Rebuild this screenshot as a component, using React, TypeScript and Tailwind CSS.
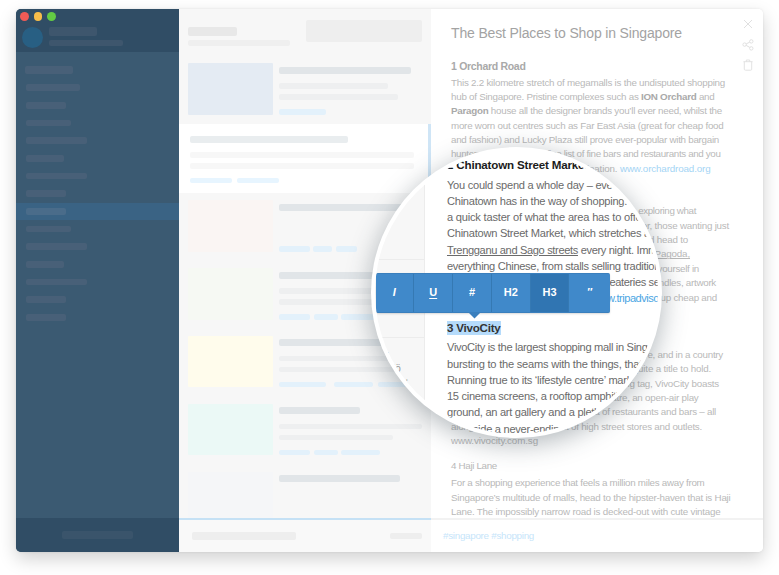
import { useLayoutEffect, useRef, type ReactNode } from "react";

/** One line of copy whose tracking is adjusted so that it fills `w` pixels. */
function Line({ w, className = "", children }: { w: number; className?: string; children: ReactNode }) {
  const ref = useRef<HTMLSpanElement>(null);
  useLayoutEffect(() => {
    const el = ref.current;
    if (!el) return;
    el.style.letterSpacing = "0px";
    const n = (el.textContent ?? "").length;
    const natural = el.getBoundingClientRect().width;
    el.style.letterSpacing = `${(w - natural) / n}px`;
  }, [w]);
  return (
    <div className={`whitespace-nowrap ${className}`}>
      <span ref={ref} className="inline-block whitespace-pre">
        {children}
      </span>
    </div>
  );
}

const navWidths = [
  "w-[54px]",
  "w-[40px]",
  "w-[44.5px]",
  "w-[61px]",
  "w-[38px]",
  "w-[61px]",
  "w-[40px]",
  "w-[40px]",
  "w-[44.5px]",
  "w-[61px]",
  "w-[38px]",
  "w-[61px]",
  "w-[40px]",
  "w-[40px]",
];

function Sidebar() {
  return (
    <aside className="flex w-[163px] shrink-0 flex-col bg-[#3b5a72]">
      <div className="h-[43px] bg-[#304d65] pt-[3px] pl-1">
        <div className="flex gap-[5px]">
          <i className="size-[8.5px] rounded-full bg-[#f05b56]" />
          <i className="size-[8.5px] rounded-full bg-[#f6bd4a]" />
          <i className="size-[8.5px] rounded-full bg-[#63ca44]" />
        </div>
        <div className="mt-[6.5px] ml-[2px] flex gap-[6px]">
          <i className="size-[20.5px] rounded-full bg-[#285f83]" />
          <div className="flex flex-col gap-[4px]">
            <i className="h-[8.5px] w-[48.5px] rounded-[2px] bg-[#3e566d]" />
            <i className="h-[6px] w-[74.5px] rounded-[2px] bg-[#3e566d]" />
          </div>
        </div>
      </div>
      <div className="flex-1 pt-[13.5px]">
        <div className="ml-[9px] h-[8.5px] w-[48px] rounded-[2px] bg-[#486078]" />
        <div className="mt-[5px]">
          {navWidths.map((w, i) => (
            <div
              key={i}
              className={`flex h-[17.67px] items-center pl-[10px] ${i === 7 ? "bg-[#3a6384]" : ""}`}
            >
              <i className={`h-[6.7px] rounded-[2px] ${i === 7 ? "bg-[#4a6c8a]" : "bg-[#486078]"} ${w}`} />
            </div>
          ))}
        </div>
      </div>
      <div className="flex h-[34px] items-center justify-center bg-[#304d65]">
        <i className="h-[8px] w-[71.5px] rounded-[2px] bg-[#3a546b]" />
      </div>
    </aside>
  );
}

type CardProps = { thumb: string; title: string; lines?: string[]; tags: { w: string }[] };

function Card({ thumb, title, lines = [], tags }: CardProps) {
  return (
    <div className="flex h-[67.9px] shrink-0 gap-[6.5px] pl-[9px]">
      <div className={`h-[51.5px] w-[84.5px] shrink-0 rounded-[1px] ${thumb}`} />
      <div className="flex h-[51.5px] flex-col pt-[3.5px]">
        <i className={`h-[7px] shrink-0 rounded-[2px] bg-[#e1e5e8] ${title}`} />
        <div className="mt-[9.5px] flex flex-1 flex-col gap-[5.5px]">
          {lines.map((l, i) => (
            <i key={i} className={`h-[5.5px] rounded-[2px] bg-[#eeeff0] ${l}`} />
          ))}
        </div>
        <div className="flex gap-[3.5px]">
          {tags.map((t, i) => (
            <i key={i} className={`h-[5.5px] rounded-[2px] bg-[#e3f1fb] ${t.w}`} />
          ))}
        </div>
      </div>
    </div>
  );
}

function NoteList() {
  return (
    <section className="flex w-[252px] shrink-0 flex-col bg-[#f7f7f7]">
      <div className="flex h-[54px] shrink-0 justify-between pr-[9px] pl-[9px]">
        <div className="flex flex-col gap-[4.5px] pt-[18px]">
          <i className="h-[8.5px] w-[49px] rounded-[2px] bg-[#e8e8e8]" />
          <i className="h-[5.5px] w-[102px] rounded-[2px] bg-[#efefef]" />
        </div>
        <i className="mt-[11px] -ml-4 h-[21.5px] w-[116px] rounded-[2px] bg-[#eeeeee]" />
      </div>
      <div className="flex h-[455px] shrink-0 flex-col overflow-hidden">
        <div className="h-[61px] shrink-0">
          <Card
            thumb="bg-[#e4ebf3]"
            title="w-[131.5px]"
            lines={["w-[109px]", "w-[119px]"]}
            tags={[{ w: "w-[47px]" }]}
          />
        </div>
        <div className="flex h-[69px] shrink-0 flex-col border-r-3 border-[#cfe5f6] bg-white pt-[11.5px] pl-[10.5px]">
          <i className="h-[7px] w-[158.5px] rounded-[2px] bg-[#e9edef]" />
          <i className="mt-[9.5px] h-[5.5px] w-[224.5px] rounded-[2px] bg-[#f7f7f7]" />
          <i className="mt-[5.5px] h-[5.5px] w-[224.5px] rounded-[2px] bg-[#f7f7f7]" />
          <div className="mt-[9.5px] flex gap-[4.5px]">
            <i className="h-[5px] w-[42.5px] rounded-[2px] bg-[#e7f5ff]" />
            <i className="h-[5px] w-[42.5px] rounded-[2px] bg-[#e7f5ff]" />
          </div>
        </div>
        <div className="pt-[7.2px]">
          <Card
            thumb="bg-[#faf5f3]"
            title="w-[131px]"
            tags={[{ w: "w-[30.5px]" }, { w: "w-[19px]" }, { w: "w-[21px]" }]}
          />
          <Card
            thumb="bg-[#f6f9f3]"
            title="w-[131px]"
            lines={["w-[120px]", "w-[120px]"]}
            tags={[{ w: "w-[31px]" }, { w: "w-[24px]" }, { w: "w-[39px]" }]}
          />
          <Card
            thumb="bg-[#fffcec]"
            title="w-[131px]"
            lines={["w-[142px]", "w-[142px]"]}
            tags={[{ w: "w-[46.5px]" }, { w: "ml-[4.5px] w-[39px]" }, { w: "ml-[2px] w-[39px]" }]}
          />
          <Card
            thumb="bg-[#ebf9f6]"
            title="w-[81px]"
            lines={["w-[143px]", "w-[114px]"]}
            tags={[{ w: "w-[31px]" }, { w: "w-[24px]" }, { w: "w-[39px]" }]}
          />
          <Card thumb="bg-[#f5f6f8]" title="w-[121px]" tags={[]} />
        </div>
      </div>
      <div className="flex flex-1 items-center justify-between border-t-2 border-[#c5e1f5] bg-[#f9f9f9] pr-[9px] pl-[13px]">
        <i className="h-[8px] w-[104px] rounded-[2px] bg-[#eeeeee]" />
        <i className="h-[5.5px] w-[32px] rounded-[2px] bg-[#eeeeee]" />
      </div>
    </section>
  );
}

function Editor() {
  return (
    <section className="flex min-w-0 flex-1 flex-col bg-white">
      <div className="relative h-[509px] overflow-hidden pl-[20px] text-[9.8px] leading-[14.36px] text-[#b9b9b9]">
        <Line w={231} className="pt-[14px] text-[14px] leading-[20px] text-[#a3a3a3]">
          The Best Places to Shop in Singapore
        </Line>
        <Line w={74.5} className="mt-[14.6px] text-[10.5px] leading-[16px] font-semibold text-[#a9a9a9]">
          1 Orchard Road
        </Line>
        <div className="mt-[2.1px]">
          <Line w={274}>This 2.2 kilometre stretch of megamalls is the undisputed shopping</Line>
          <Line w={263.5}>
            hub of Singapore. Pristine complexes such as <b className="text-[#a9a9a9]">ION Orchard</b> and
          </Line>
          <Line w={271}>
            <b className="text-[#a9a9a9]">Paragon</b> house all the designer brands you’ll ever need, whilst the
          </Line>
          <Line w={272.5}>more worn out centres such as Far East Asia (great for cheap food</Line>
          <Line w={268}>and fashion) and Lucky Plaza still prove ever-popular with bargain</Line>
          <Line w={269.5}>hunters. There is also a fine list of fine bars and restaurants and you</Line>
          <div className="flex">
            <Line w={169}>{"can see them all at the final destination. "}</Line>
            <Line w={90.5} className="text-[#a5d5f5]">
              www.orchardroad.org
            </Line>
          </div>
        </div>
        <Line w={136} className="mt-[10.6px] text-[10.5px] leading-[16px] font-semibold text-[#a9a9a9]">
          2 Chinatown Street Market
        </Line>
        <div className="mt-[1.6px]">
          <Line w={245}>You could spend a whole day – even a week – exploring what</Line>
          <Line w={278}>Chinatown has in the way of shopping. However, those wanting just</Line>
          <Line w={237}>a quick taster of what the area has to offer should head to</Line>
          <Line w={239}>
            Chinatown Street Market, which stretches along <u>Pagoda,</u>
          </Line>
          <Line w={248}>
            <u>Trengganu and Sago streets</u> every night. Immerse yourself in
          </Line>
          <Line w={265}>everything Chinese, from stalls selling traditional candles, artwork</Line>
          <Line w={266}>and jewellery through to the many eateries serving up cheap and</Line>
          <Line w={200}>
            delicious local food and drinks. <span className="text-[#a5d5f5]">www.tripadvisor.com</span>
          </Line>
        </div>
        <Line w={48} className="mt-[10.2px] text-[10.5px] leading-[16px] font-semibold text-[#a9a9a9]">
          3 VivoCity
        </Line>
        <div className="mt-[2.4px]">
          <Line w={272}>VivoCity is the largest shopping mall in Singapore, and in a country</Line>
          <Line w={260}>bursting to the seams with the things, that’s quite a title to hold.</Line>
          <Line w={268}>Running true to its ‘lifestyle centre’ marketing tag, VivoCity boasts</Line>
          <Line w={247.5}>15 cinema screens, a rooftop amphitheatre, an open-air play</Line>
          <Line w={265}>ground, an art gallery and a plethora of restaurants and bars – all</Line>
          <Line w={251}>alongside a never-ending list of high street stores and outlets.</Line>
          <Line w={87}>www.vivocity.com.sg</Line>
        </div>
        <Line w={46} className="mt-[10.9px]">
          4 Haji Lane
        </Line>
        <div className="mt-[2.6px]">
          <Line w={253.5}>For a shopping experience that feels a million miles away from</Line>
          <Line w={279.5}>Singapore’s multitude of malls, head to the hipster-haven that is Haji</Line>
          <Line w={269.5}>Lane. The impossibly narrow road is decked-out with cute vintage</Line>
        </div>
        <div className="absolute top-[9px] right-[8px] flex w-[14px] flex-col items-center gap-[8.5px] text-[#e0e0e0]">
          <svg width="12" height="12" viewBox="0 0 12 12" fill="none" stroke="currentColor">
            <path d="M2 2l8 8M10 2l-8 8" />
          </svg>
          <svg width="12" height="12" viewBox="0 0 12 12" fill="none" stroke="currentColor">
            <circle cx="2.6" cy="5.6" r="1.7" />
            <circle cx="9.3" cy="2.4" r="1.7" />
            <circle cx="9.3" cy="9.4" r="1.7" />
            <path d="M4.2 4.9l3.6-1.8M4.2 6.4l3.6 2" />
          </svg>
          <svg width="12" height="13" viewBox="0 0 12 13" fill="none" stroke="currentColor" strokeWidth="0.9">
            <path d="M1.5 2.7h9M4.3 2.7V1h3.4v1.7M2.3 2.7v7.5q0 1 1 1h5.4q1 0 1-1V2.7" />
          </svg>
        </div>
      </div>
      <div className="flex flex-1 items-center border-t-2 border-[#f2f2f2] pl-[12px] text-[9.8px] leading-[14px] text-[#c6e5fa]">
        <Line w={91} className="mb-[1px]">
          #singapore #shopping
        </Line>
      </div>
    </section>
  );
}

function Toolbar() {
  const cell = "flex w-[38.8px] items-center justify-center border-r border-[#3579b3]";
  return (
    <div className="absolute top-[121.5px] left-[0.5px] z-10">
      <div className="flex h-[40px] w-[234px] overflow-hidden rounded-[2px] border-y border-[#3a7fbd] bg-[#4089ca] text-[11px] font-bold text-white shadow-[0_1px_2px_rgba(0,0,0,0.15)]">
        <span className={`${cell} italic`}>I</span>
        <span className={`${cell} underline underline-offset-2`}>U</span>
        <span className={cell}>#</span>
        <span className={cell}>H2</span>
        <span className={`${cell} bg-[#3075b2]`}>H3</span>
        <span className="flex flex-1 items-center justify-center italic">″</span>
      </div>
      <svg className="ml-[93px] block" width="11" height="6" viewBox="0 0 11 6">
        <path d="M0 0h11L5.5 5.5z" fill="#3a7fbd" />
      </svg>
    </div>
  );
}

function Lens() {
  return (
    <div className="absolute top-[147px] left-[371px] size-[291px] rounded-full bg-white p-[4px] shadow-[0_6px_26px_rgba(50,65,75,0.38)]">
      <div className="relative flex size-[283px] overflow-hidden rounded-full bg-white">
        <div className="w-[49.5px] shrink-0 border-r border-[#ececec] bg-[#f7f7f7]">
          <div className="h-[109px] border-b border-[#ececec]" />
          <div className="h-[77.5px] border-b border-[#ececec]" />
          <div className="pt-[12px] pl-[12px] text-[8px] leading-[10px] text-[#999]">’</div>
          <div className="pl-[18px] text-[10px] leading-[18px] text-[#999]">iö</div>
          <div className="pl-[31px] text-[8px] leading-[8px] text-[#777]">‘</div>
        </div>
        <div className="pl-[22.5px] text-[11.1px] leading-[16.25px] text-[#6a6a6a]">
          <Line w={141} className="pt-[5.5px] text-[11.6px] font-semibold text-[#1c1c1c]">
            2 Chinatown Street Market
          </Line>
          <div className="mt-[3.9px]">
            <Line w={165.5}>You could spend a whole day – eve</Line>
            <Line w={180}>Chinatown has in the way of shopping.</Line>
            <Line w={194.5}>a quick taster of what the area has to offe</Line>
            <Line w={203}>Chinatown Street Market, which stretches a</Line>
            <Line w={210}>
              <u>Trengganu and Sago streets</u> every night. Imm
            </Line>
            <Line w={213}>everything Chinese, from stalls selling tradition</Line>
            <div className="flex">
              <Line w={162.5}>{"and jewellery through to the many "}</Line>
              <Line w={50}>eateries se</Line>
            </div>
            <div className="flex">
              <Line w={145}>{"delicious local food and drinks. "}</Line>
              <Line w={67} className="text-[#4ba5e3]">
                www.tripadviso
              </Line>
            </div>
          </div>
          <div className="mt-[14.4px] flex">
            <Line w={53.5} className="bg-[#b5dbfb] text-[11.6px] leading-[13.5px] font-semibold text-[#333]">
              3 VivoCity
            </Line>
          </div>
          <div className="mt-[4.8px]">
            <Line w={200.5}>VivoCity is the largest shopping mall in Sing</Line>
            <Line w={195}>bursting to the seams with the things, that</Line>
            <Line w={185}>Running true to its ‘lifestyle centre’ mark</Line>
            <Line w={175}>15 cinema screens, a rooftop amphith</Line>
            <Line w={153}>ground, an art gallery and a pleth</Line>
            <Line w={118}>alongside a never-ending</Line>
          </div>
        </div>
        <Toolbar />
      </div>
    </div>
  );
}

export default function App() {
  return (
    <main className="relative h-[575px] w-[779px] overflow-hidden bg-white pt-[9px] pl-[16px] font-['Liberation_Sans',sans-serif] antialiased">
      <div className="flex h-[543px] w-[747px] overflow-hidden rounded-[5px] shadow-[0_7px_18px_rgba(0,0,0,0.18),0_0_3px_rgba(0,0,0,0.08)]">
        <Sidebar />
        <NoteList />
        <Editor />
      </div>
      <Lens />
    </main>
  );
}
